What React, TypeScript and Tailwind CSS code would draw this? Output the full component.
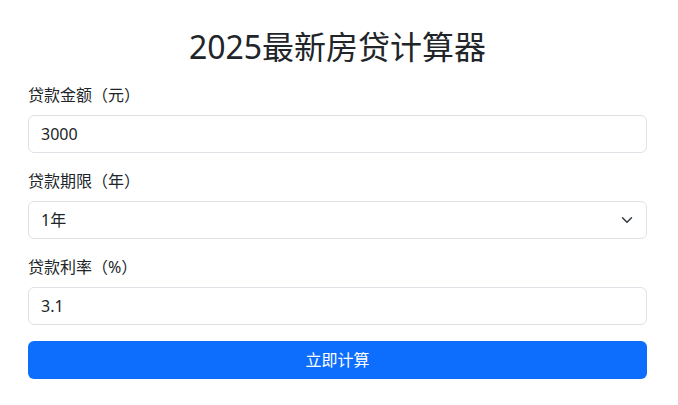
import { useState } from 'react'

const font = { fontFamily: '"Noto Sans", "Noto Sans CJK SC", sans-serif' }

function Field({ label, children }: { label: string; children: React.ReactNode }) {
  return (
    <div className="mb-4">
      <label className="block mb-2 text-[16px] leading-6 text-[#212529]">{label}</label>
      {children}
    </div>
  )
}

export default function App() {
  const [amount, setAmount] = useState('3000')
  const [years, setYears] = useState('1')
  const [rate, setRate] = useState('3.1')

  const inputCls =
    'block w-full h-[38px] px-3 py-1.5 text-[16px] leading-6 text-[#212529] bg-white border border-[#dee2e6] rounded-[6px] outline-none'

  return (
    <div className="min-h-screen bg-white" style={font}>
      <div className="pl-7 pr-[31px] pt-[27px]">
        <h1 className="text-center text-[32px] leading-[39px] font-normal text-[#212529] mb-[17px]">
          2025最新房贷计算器
        </h1>

        <Field label="贷款金额（元）">
          <input className={inputCls} value={amount} onChange={(e) => setAmount(e.target.value)} />
        </Field>

        <Field label="贷款期限（年）">
          <div className="relative">
            <select
              className={inputCls + ' appearance-none pr-9'}
              value={years}
              onChange={(e) => setYears(e.target.value)}
            >
              {[1, 2, 3, 5, 10, 15, 20, 25, 30].map((y) => (
                <option key={y} value={String(y)}>
                  {y}年
                </option>
              ))}
            </select>
            <svg
              className="absolute right-3 top-1/2 -translate-y-1/2 pointer-events-none"
              width="16"
              height="12"
              viewBox="0 0 16 16"
              fill="none"
              stroke="#343a40"
              strokeWidth="2"
              strokeLinecap="round"
              strokeLinejoin="round"
            >
              <path d="m2 5 6 6 6-6" />
            </svg>
          </div>
        </Field>

        <Field label="贷款利率（%）">
          <input className={inputCls} value={rate} onChange={(e) => setRate(e.target.value)} />
        </Field>

        <button className="block w-full h-[38px] rounded-[6px] bg-[#0d6efd] text-white text-[16px] leading-6">
          立即计算
        </button>
      </div>
    </div>
  )
}
